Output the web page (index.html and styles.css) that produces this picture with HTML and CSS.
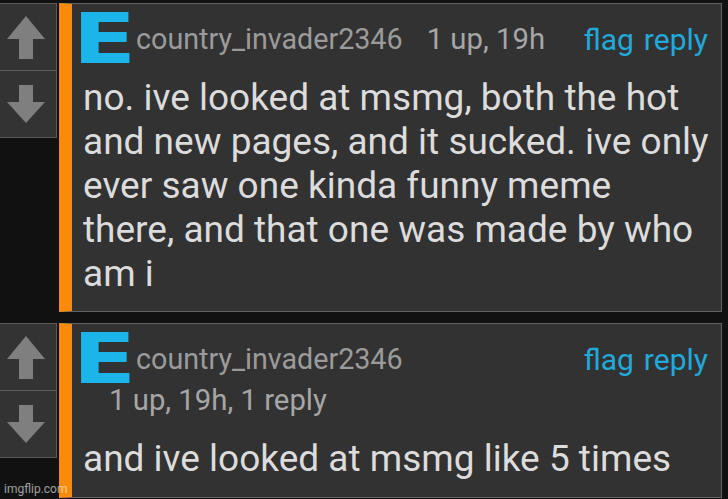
FILE: index.html
```html
<!DOCTYPE html>
<html lang="en">
<head>
  <meta charset="UTF-8">
  <meta name="viewport" content="width=device-width, initial-scale=1.0">
  <title>Comments</title>
  <link rel="stylesheet" href="styles.css">
</head>
<body>
  <div class="thread">

    <div class="comment">
      <div class="votes">
        <div class="vote">
          <svg width="56" height="66" viewBox="0 0 56 66"><polygon points="26,12 45,35 33,35 33,55 19,55 19,35 7,35"/></svg>
        </div>
        <div class="vote">
          <svg width="56" height="66" viewBox="0 0 56 66"><polygon points="19,14 33,14 33,31 45,31 26,52 7,31 19,31"/></svg>
        </div>
      </div>
      <div class="box">
        <div class="head">
          <span class="avatar"><span>E</span></span>
          <span class="user">country_invader2346</span>
          <span class="meta">1 up, 19h</span>
          <span class="links"><a>flag</a><a>reply</a></span>
        </div>
        <p class="text">no. ive looked at msmg, both the hot<br>and new pages, and it sucked. ive only<br>ever saw one kinda funny meme<br>there, and that one was made by who<br>am i</p>
      </div>
    </div>

    <div class="comment">
      <div class="votes">
        <div class="vote">
          <svg width="56" height="66" viewBox="0 0 56 66"><polygon points="26,12 45,35 33,35 33,55 19,55 19,35 7,35"/></svg>
        </div>
        <div class="vote">
          <svg width="56" height="66" viewBox="0 0 56 66"><polygon points="19,14 33,14 33,31 45,31 26,52 7,31 19,31"/></svg>
        </div>
      </div>
      <div class="box">
        <div class="head">
          <span class="avatar"><span>E</span></span>
          <span class="user">country_invader2346</span>
          <span class="links"><a>flag</a><a>reply</a></span>
        </div>
        <div class="meta-line">1 up, 19h, 1 reply</div>
        <p class="text text-short">and ive looked at msmg like 5 times</p>
      </div>
    </div>

  </div>
  <div class="watermark">imgflip.com</div>
</body>
</html>
```

FILE: styles.css
```css
body {
  margin: 0;
  background-color: #111;
  font-family: Roboto, "Noto Sans", sans-serif;
  color: #dcdcdc;
  width: 728px;
  height: 499px;
  overflow: hidden;
  position: relative;
}

.thread {
  display: flex;
  flex-direction: column;
  gap: 11px;
  padding-top: 3px;
}

.comment {
  display: flex;
  align-items: flex-start;
}

/* vote arrows column */
.votes {
  width: 57px;
  flex: none;
  border-top: 1px solid #5a5a5a;
}

.vote {
  height: 66px;
  background-color: #333;
  border-right: 1px solid #5a5a5a;
  border-bottom: 1px solid #5a5a5a;
}

.vote svg {
  display: block;
  fill: #7f7f7f;
}

/* comment body */
.box {
  flex: 1;
  margin-left: 2px;
  margin-right: 6px;
  background-color: #323232;
  border: 1px solid #626262;
  border-left: 13px solid #fa8a0a;
  padding: 10px 13px 15px 7px;
}

.head {
  display: flex;
  align-items: center;
  height: 50px;
}

/* the letter is stretched wide, so the box is as wide as the
   stretched glyph and pulled back in with negative margins */
.avatar {
  width: 64px;
  height: 50px;
  margin: 0 -8px 0 -7px;
  flex: none;
  display: flex;
  justify-content: center;
  align-items: center;
}

.avatar span {
  font-family: "DejaVu Sans", sans-serif;
  font-weight: 700;
  font-size: 68.6px;
  line-height: 0.73;
  color: #1bb5e9;
  transform: scaleX(1.36);
}

.user {
  margin-left: 8px;
  font-size: 28.7px;
  color: #9b9b9b;
}

.meta {
  margin-left: 24px;
  font-size: 29.3px;
  color: #a6a6a6;
}

.links {
  margin-left: auto;
  display: flex;
  gap: 10px;
  font-size: 30px;
  color: #22a9dc;
}

.meta-line {
  padding-left: 30px;
  font-size: 29.3px;
  line-height: 33px;
  color: #a6a6a6;
}

.text {
  margin: 12px -10px 0 4px;
  font-size: 37px;
  line-height: 44px;
}

.text-short {
  margin-top: 20px;
  margin-bottom: 1px;
}

.watermark {
  position: absolute;
  left: 4px;
  bottom: 3px;
  font-family: Roboto, sans-serif;
  font-size: 12px;
  color: rgba(255, 255, 255, 0.6);
}
```
